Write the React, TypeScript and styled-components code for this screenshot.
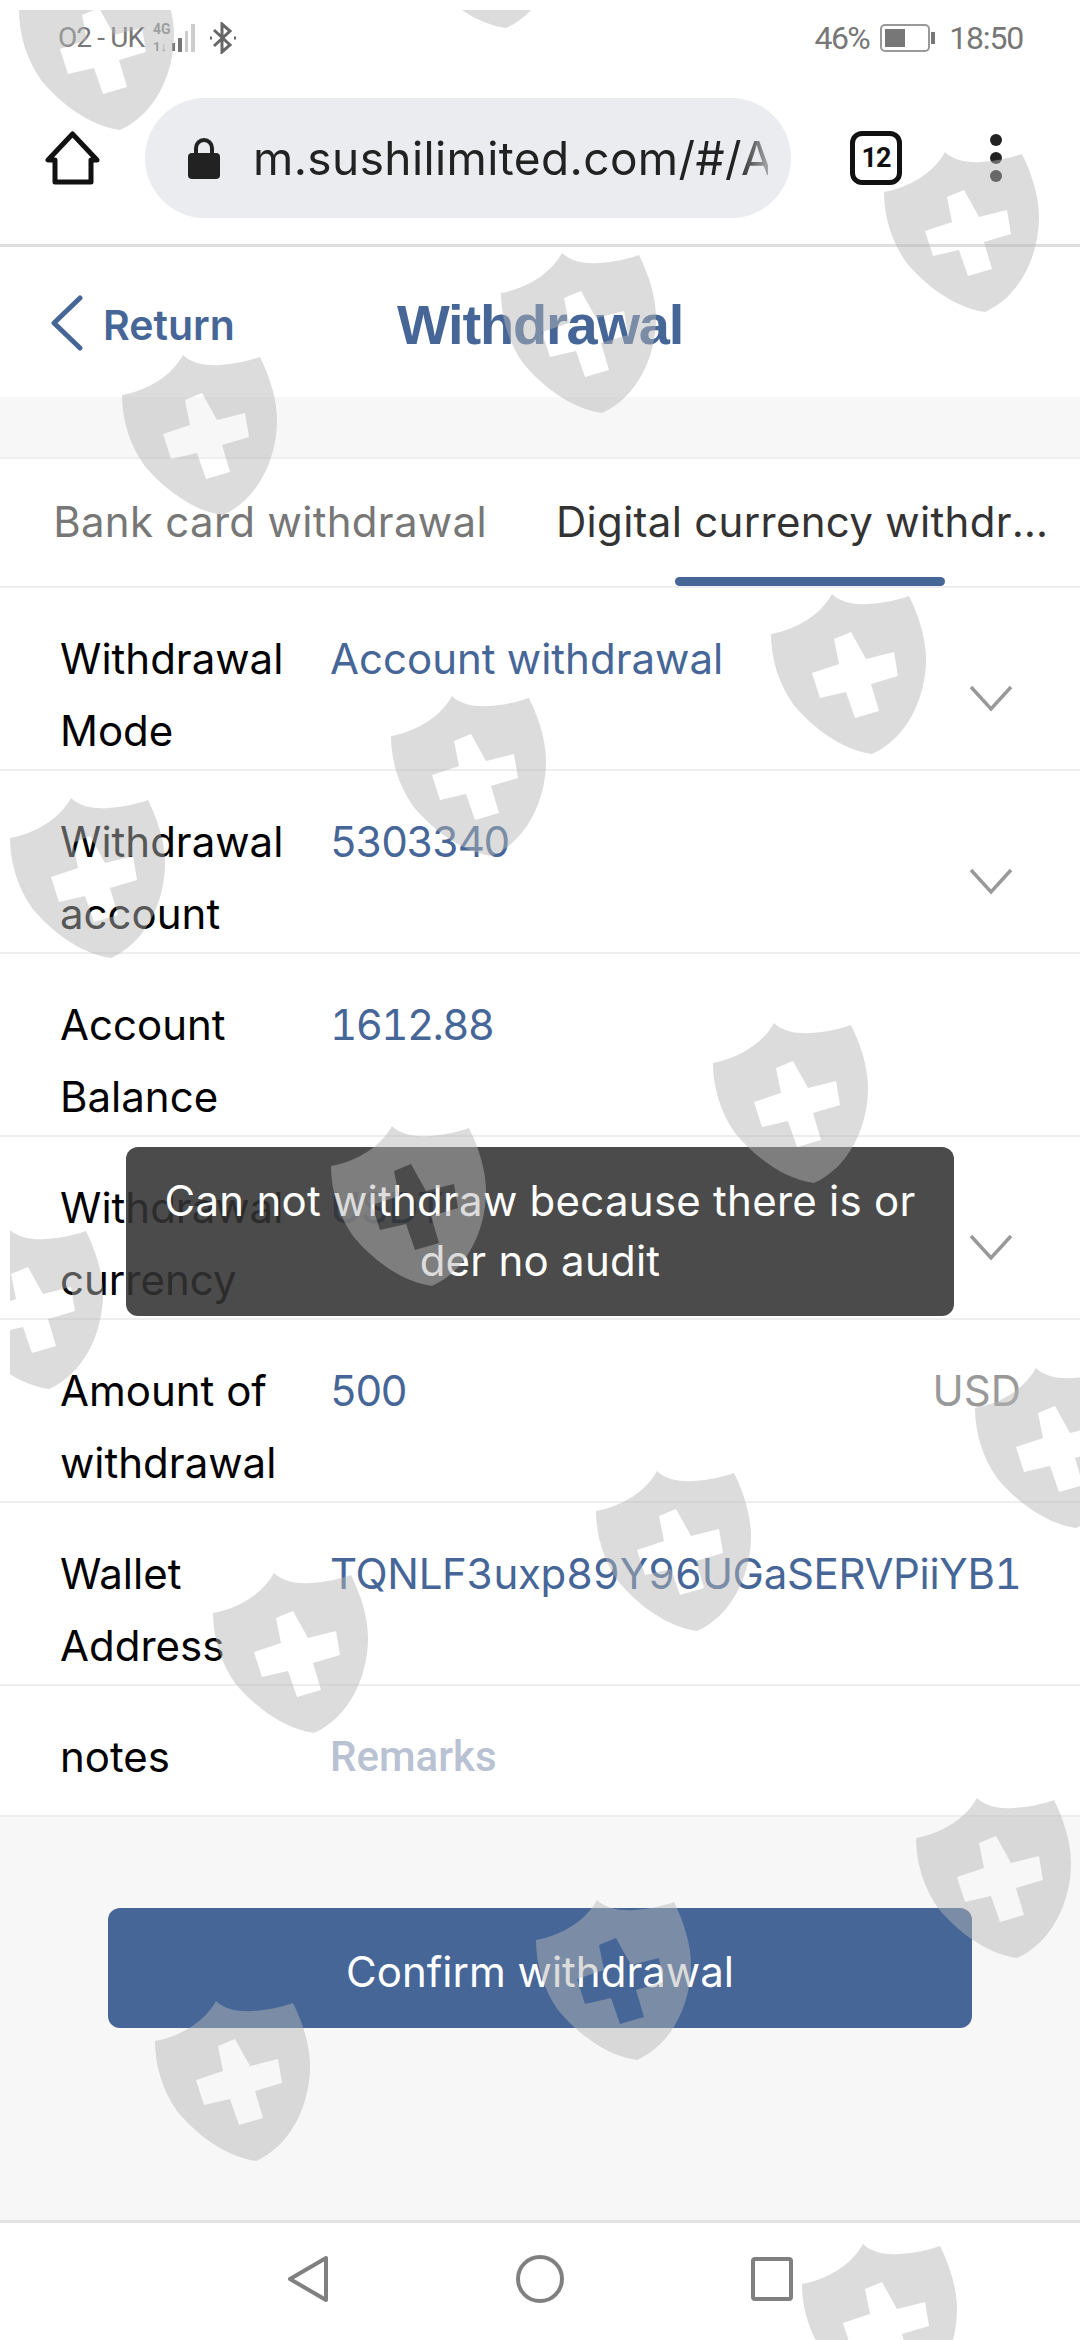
import React from 'react'
import styled, { createGlobalStyle } from 'styled-components'

const blue = '#466698'

const GlobalStyle = createGlobalStyle`
  html, body { margin: 0; padding: 0; background: #fff; }
  * { box-sizing: border-box; }
`

const Page = styled.div`
  position: relative;
  width: 1080px;
  height: 2340px;
  overflow: hidden;
  display: flex;
  flex-direction: column;
  background: #f7f7f7;
  font-family: Inter, 'Liberation Sans', sans-serif;
`

const StatusBar = styled.div`
  height: 75px;
  background: #fff;
  display: flex;
  align-items: center;
  justify-content: space-between;
  padding: 0 57px 0 58px;
  color: #777;
  font-family: Roboto, sans-serif;
  font-size: 28px;
`

const StatusGroup = styled.div`
  display: flex;
  align-items: center;
`

const Carrier = styled.span`
  letter-spacing: -0.9px;
  width: 95px;
  white-space: nowrap;
`

const Percent = styled.span`
  font-size: 32px;
  letter-spacing: -1.5px;
  margin-right: 11px;
`

const Clock = styled.span`
  font-size: 32px;
  letter-spacing: -1.2px;
  margin-left: 14px;
`

const Bluetooth = styled.svg`
  margin-left: -3px;
`

const Toolbar = styled.div`
  height: 172px;
  background: #fff;
  border-bottom: 3px solid #dedede;
  display: flex;
  align-items: center;
  padding: 0 0 3px 45px;
`

const UrlPill = styled.div`
  width: 646px;
  height: 120px;
  margin-left: 45px;
  border-radius: 60px;
  background: #ebecf0;
  display: flex;
  align-items: center;
  padding-left: 43px;
`

const UrlText = styled.div`
  width: 515px;
  margin-left: 33px;
  overflow: hidden;
  white-space: nowrap;
  font-family: Inter, sans-serif;
  font-size: 46px;
  letter-spacing: 0.4px;
  color: #222;
  -webkit-mask-image: linear-gradient(to right, #000 94%, rgba(0, 0, 0, 0.35) 100%);
  mask-image: linear-gradient(to right, #000 94%, rgba(0, 0, 0, 0.35) 100%);
`

const TabCount = styled.div`
  width: 52px;
  height: 54px;
  margin-left: 59px;
  border: 5px solid #111;
  border-radius: 12px;
  display: flex;
  align-items: center;
  justify-content: center;
  font-family: Roboto, sans-serif;
  font-weight: 700;
  font-size: 27px;
  letter-spacing: -1px;
  color: #111;
`

const MenuDots = styled.div`
  margin-left: 88px;
  display: flex;
  flex-direction: column;
  gap: 6px;
`

const Dot = styled.span`
  width: 12px;
  height: 12px;
  border-radius: 50%;
  background: #222;
`

const Header = styled.header`
  height: 150px;
  background: #fff;
  display: grid;
  grid-template-columns: 1fr auto 1fr;
  align-items: center;
  color: ${blue};
`

const BackLink = styled.div`
  display: flex;
  align-items: center;
  padding: 2px 0 0 50px;
  gap: 20px;
  font-family: Inter, sans-serif;
  font-weight: 600;
  font-size: 41px;
`

const BackText = styled.span`
  padding-top: 3px;
`

const Title = styled.h1`
  margin: 4px 0 0;
  font-family: 'Liberation Sans', sans-serif;
  font-weight: 700;
  font-size: 56px;
  letter-spacing: -1.2px;
`

const Band = styled.div`
  height: 60px;
`

const Tabs = styled.div`
  height: 131px;
  background: #fff;
  border-top: 2px solid #eee;
  border-bottom: 2px solid #eee;
  display: grid;
  grid-template-columns: 540px 540px;
`

const Tab = styled.div<{ $active?: boolean }>`
  position: relative;
  padding: 0 16px;
  line-height: 125px;
  height: 127px;
  text-align: center;
  font-size: 42px;
  letter-spacing: 0.3px;
  color: ${p => (p.$active ? '#333' : '#777')};
  white-space: nowrap;
  overflow: hidden;
  text-overflow: ellipsis;
  ${p =>
    p.$active &&
    `
    &::after {
      content: '';
      position: absolute;
      left: 135px;
      bottom: 0;
      width: 270px;
      height: 9px;
      border-radius: 5px;
      background: ${blue};
    }
  `}
`

const Form = styled.div`
  background: #fff;
`

const Row = styled.div<{ $short?: boolean }>`
  height: ${p => (p.$short ? 131 : 183)}px;
  display: flex;
  align-items: flex-start;
  padding: 35px 62px 0 60px;
  border-bottom: 2px solid #eee;
  font-size: 42px;
  line-height: 72px;
`

const Label = styled.div`
  width: 270px;
  flex: none;
  color: #000;
`

const Value = styled.div<{ $placeholder?: boolean; $tracking?: number }>`
  flex: 1;
  white-space: nowrap;
  font-variant-numeric: tabular-nums;
  letter-spacing: ${p => p.$tracking ?? 0}px;
  color: ${p => (p.$placeholder ? '#b9c2d2' : blue)};
  ${p => p.$placeholder && 'font-family: Roboto, sans-serif; font-weight: 500;'}
`

const Unit = styled.div`
  color: #999;
  margin-right: -3px;
`

const Chevron = styled.svg`
  width: 44px;
  height: 27px;
  margin: 62px 5px 0 0;
  flex: none;
`

const Footer = styled.div`
  flex: 1;
  padding-top: 91px;
  display: flex;
  justify-content: center;
`

const ConfirmButton = styled.button`
  width: 864px;
  height: 120px;
  border: 0;
  border-radius: 12px;
  padding: 6px 0 0;
  background: ${blue};
  color: #fff;
  font-family: Inter, sans-serif;
  font-size: 42px;
`

const NavBar = styled.nav`
  height: 120px;
  background: #fff;
  border-top: 3px solid #e3e3e3;
  display: flex;
  align-items: center;
  justify-content: center;
  gap: 187px;
  padding-bottom: 5px;
`

const Toast = styled.div`
  position: absolute;
  left: 126px;
  top: 1147px;
  width: 828px;
  height: 169px;
  padding: 24px 30px;
  border-radius: 12px;
  background: rgba(50, 50, 50, 0.88);
  color: #fff;
  font-size: 42px;
  letter-spacing: 0.25px;
  line-height: 60px;
  text-align: center;
`

const Watermarks = styled.div`
  position: absolute;
  left: 10px;
  top: 10px;
  right: 0;
  bottom: 0;
  overflow: hidden;
  pointer-events: none;
`

const Shield = styled.svg<{ $x: number; $y: number }>`
  position: absolute;
  left: ${p => p.$x - 10}px;
  top: ${p => p.$y - 10}px;
  width: 155px;
  height: 160px;
`

const shieldSpots = [
  [19, -30], [405, -132], [884, 152], [501, 253], [122, 355], [771, 594],
  [391, 696], [10, 798], [713, 1023], [331, 1126], [-52, 1229], [975, 1368],
  [596, 1471], [213, 1573], [916, 1798], [536, 1900], [155, 2001], [802, 2244],
]

const shieldPath =
  'M61 0C70 9 85 11 98 10C113 9 127 6 138 2C148 22 155 45 155 65C155 105 135 145 101 160C70 156 40 132 22 110C8 90 0 65 0 40C27 35 50 20 61 0Z' +
  'M63 45L80 38L95 65L123 58L127 82L100 90L108 117L84 124L75 98L49 104L41 79L68 70Z'

type FormRow = {
  label: string
  value: string
  select?: boolean
  unit?: string
  tracking?: number
}

const rows: FormRow[] = [
  { label: 'Withdrawal Mode', value: 'Account withdrawal', select: true },
  { label: 'Withdrawal account', value: '5303340', select: true, tracking: -1.7 },
  { label: 'Account Balance', value: '1612.88', tracking: -1.6 },
  { label: 'Withdrawal currency', value: 'USDT', select: true },
  { label: 'Amount of withdrawal', value: '500', unit: 'USD', tracking: -2 },
  { label: 'Wallet Address', value: 'TQNLF3uxp89Y96UGaSERVPiiYB1', tracking: -0.33 },
]

const App: React.FC = () => (
  <Page>
    <GlobalStyle />
    <StatusBar>
      <StatusGroup>
        <Carrier>O2 - UK</Carrier>
        <svg width="60" height="34" viewBox="0 0 60 34">
          <text x="0" y="13" fontFamily="Roboto, sans-serif" fontWeight="700" fontSize="14" fill="#888">4G</text>
          <text x="0" y="30" fontFamily="Roboto, sans-serif" fontWeight="700" fontSize="13" fill="#888">1↓</text>
          <rect x="19" y="22" width="3" height="8" fill="#777" />
          <rect x="25" y="17" width="4" height="14" fill="#777" />
          <rect x="32" y="10" width="3" height="21" fill="#ccc" />
          <rect x="38" y="3" width="4" height="28" fill="#ccc" />
        </svg>
        <Bluetooth width="26" height="32" viewBox="0 0 26 32" fill="none" stroke="#666" strokeWidth="3">
          <path d="M4 8L20 23L12 30V2L20 9L4 24" />
          <path d="M0 16h2M24 16h2" />
        </Bluetooth>
      </StatusGroup>
      <StatusGroup>
        <Percent>46%</Percent>
        <svg width="55" height="28" viewBox="0 0 55 28" fill="none">
          <rect x="1" y="1" width="48" height="26" rx="4" stroke="#999" strokeWidth="2" />
          <rect x="5" y="5" width="20" height="18" fill="#777" />
          <rect x="51" y="8" width="4" height="12" fill="#777" />
        </svg>
        <Clock>18:50</Clock>
      </StatusGroup>
    </StatusBar>
    <Toolbar>
      <svg width="55" height="54" viewBox="0 0 55 54" fill="none" stroke="#111" strokeWidth="5" strokeLinejoin="round">
        <path d="M27.5 3L3 29H10V51H46V29H52Z" />
      </svg>
      <UrlPill>
        <svg width="32" height="42" viewBox="0 0 32 42">
          <path d="M8 18V11a8 8 0 0 1 16 0v7" fill="none" stroke="#222" strokeWidth="4" />
          <rect x="0" y="16" width="32" height="26" rx="4" fill="#222" />
        </svg>
        <UrlText>m.sushilimited.com/#/A</UrlText>
      </UrlPill>
      <TabCount>12</TabCount>
      <MenuDots>
        <Dot />
        <Dot />
        <Dot />
      </MenuDots>
    </Toolbar>
    <Header>
      <BackLink>
        <svg width="33" height="56" viewBox="0 0 33 56" fill="none" stroke={blue} strokeWidth="5" strokeLinecap="round" strokeLinejoin="round">
          <path d="M30 3L4 28L30 53" />
        </svg>
        <BackText>Return</BackText>
      </BackLink>
      <Title>Withdrawal</Title>
      <div />
    </Header>
    <Band />
    <Tabs>
      <Tab>Bank card withdrawal</Tab>
      <Tab $active>Digital currency withdrawal</Tab>
    </Tabs>
    <Form>
      {rows.map(r => (
        <Row key={r.label}>
          <Label>{r.label}</Label>
          <Value $tracking={r.tracking}>{r.value}</Value>
          {r.unit && <Unit>{r.unit}</Unit>}
          {r.select && (
            <Chevron viewBox="0 0 44 27" fill="none" stroke="#999" strokeWidth="3.5">
              <path d="M2 2L22 24L42 2" />
            </Chevron>
          )}
        </Row>
      ))}
      <Row $short>
        <Label>notes</Label>
        <Value $placeholder>Remarks</Value>
      </Row>
    </Form>
    <Footer>
      <ConfirmButton>Confirm withdrawal</ConfirmButton>
    </Footer>
    <NavBar>
      <svg width="42" height="48" viewBox="0 0 42 48" fill="none" stroke="#808080" strokeWidth="4" strokeLinejoin="round">
        <path d="M39 3V45L3 24Z" />
      </svg>
      <svg width="48" height="48" viewBox="0 0 48 48" fill="none" stroke="#808080" strokeWidth="4">
        <circle cx="24" cy="24" r="22" />
      </svg>
      <svg width="42" height="44" viewBox="0 0 42 44" fill="none" stroke="#808080" strokeWidth="4" strokeLinejoin="round">
        <rect x="2" y="2" width="38" height="40" rx="2" />
      </svg>
    </NavBar>
    <Toast>Can not withdraw because there is or der no audit</Toast>
    <Watermarks>
      {shieldSpots.map(([x, y]) => (
        <Shield key={`${x}-${y}`} $x={x} $y={y} viewBox="0 0 155 160">
          <path d={shieldPath} fill="rgba(181,181,181,0.48)" fillRule="evenodd" />
        </Shield>
      ))}
    </Watermarks>
  </Page>
)

export default App
